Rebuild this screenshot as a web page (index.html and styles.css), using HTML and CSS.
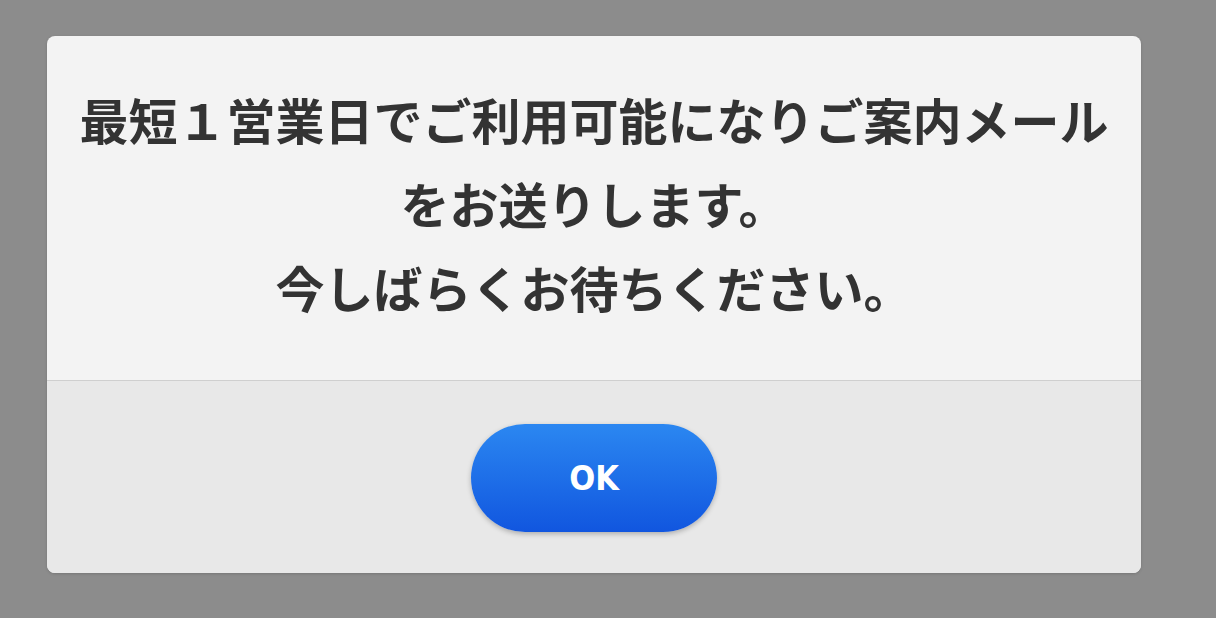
FILE: index.html
```html
<!DOCTYPE html>
<html lang="ja">
<head>
  <meta charset="UTF-8">
  <title>ご案内</title>
  <link rel="stylesheet" href="styles.css">
</head>
<body>
  <div class="overlay">
    <div class="dialog">
      <div class="dialog-body">
        <p class="message">最短１営業日でご利用可能になりご案内メールをお送りします。<br>今しばらくお待ちください。</p>
      </div>
      <div class="dialog-footer">
        <button class="ok-btn">OK</button>
      </div>
    </div>
  </div>
</body>
</html>
```

FILE: styles.css
```css
html, body {
  margin: 0;
  height: 100%;
}

body {
  font-family: "Noto Sans CJK JP", "Noto Sans", sans-serif;
  background: #8c8c8c;
}

.overlay {
  padding: 36px 75px 0 47px;
}

.dialog {
  width: 1094px;
  background: #f3f3f3;
  border-radius: 8px;
  overflow: hidden;
  box-shadow: 0 1px 3px rgba(0, 0, 0, 0.15);
}

.dialog-body {
  padding: 41px 30px 51px;
  border-bottom: 1px solid #cfcfcf;
}

.message {
  margin: 0;
  font-size: 49px;
  font-weight: bold;
  line-height: 84px;
  color: #333;
  text-align: center;
}

.dialog-footer {
  background: #e8e8e8;
  display: flex;
  justify-content: center;
  padding: 43px 0 41px;
}

.ok-btn {
  width: 246px;
  height: 108px;
  border: none;
  border-radius: 54px;
  background: linear-gradient(#2b87f1, #1156df);
  color: #fff;
  font-family: "DejaVu Sans Condensed", "Liberation Sans", sans-serif;
  font-size: 34px;
  font-weight: bold;
  box-shadow: 0 2px 5px rgba(0, 0, 0, 0.25);
  cursor: pointer;
}
```
